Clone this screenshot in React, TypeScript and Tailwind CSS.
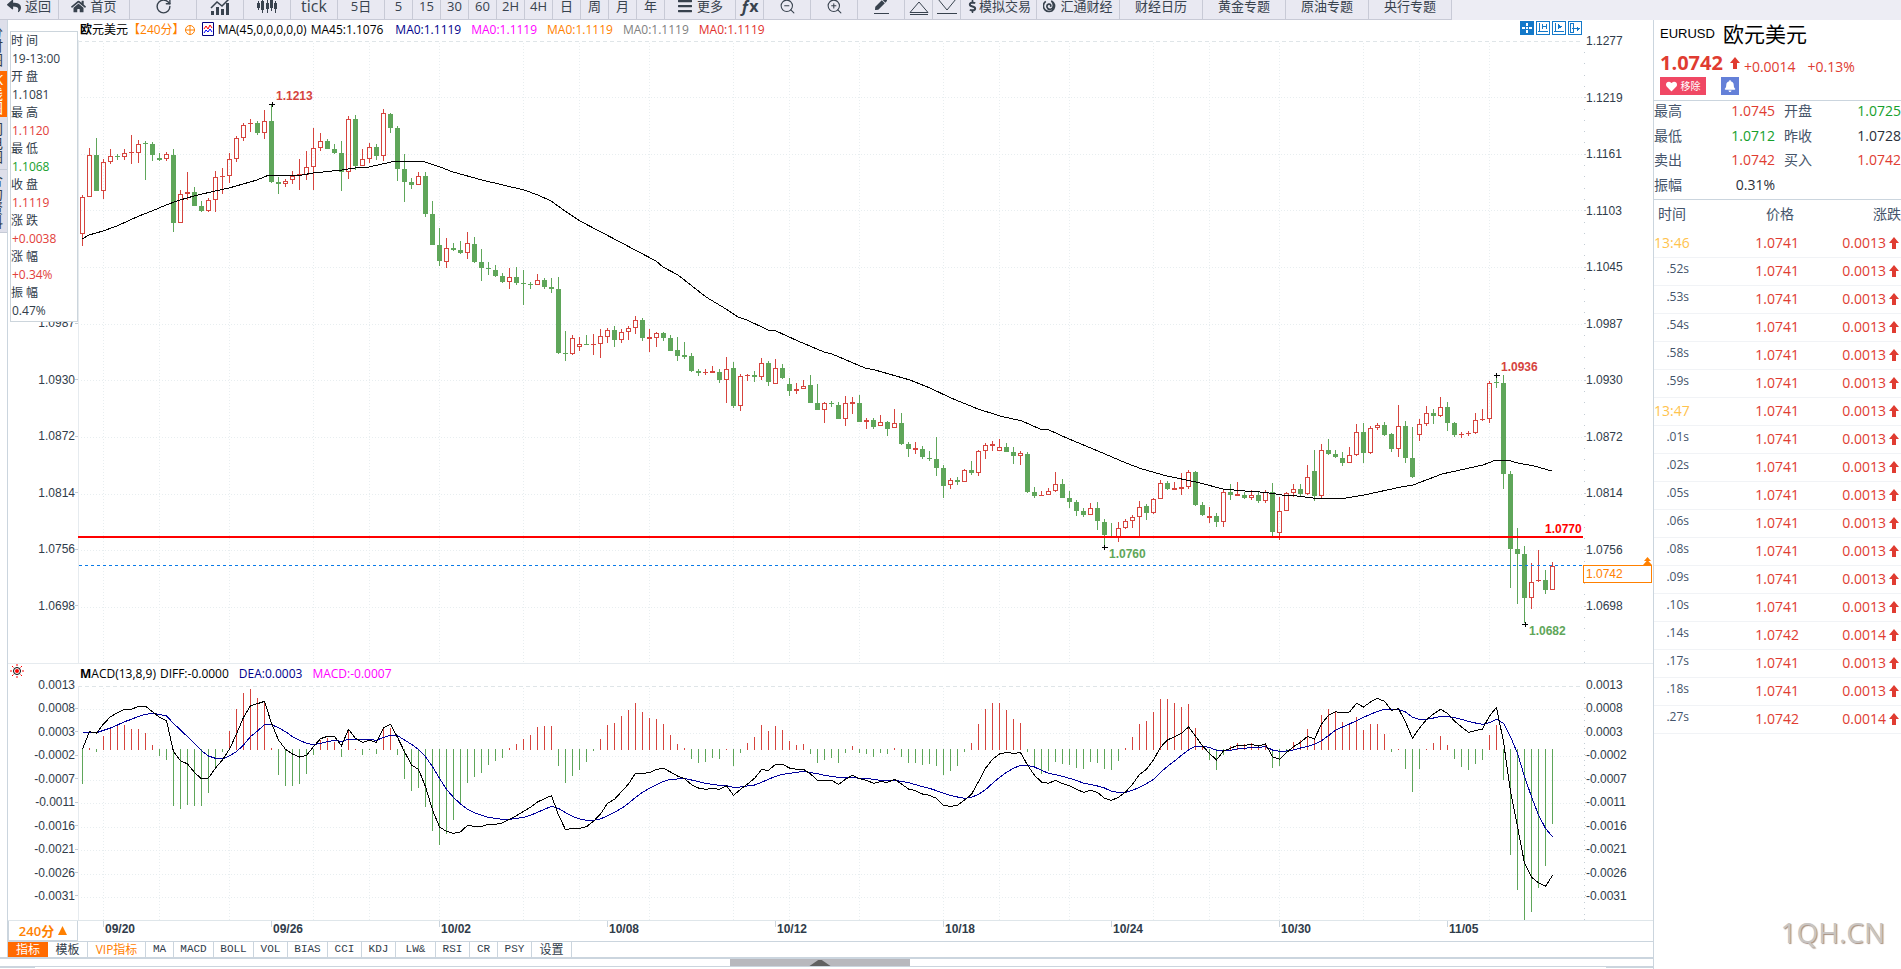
import type { ReactNode } from 'react'
import { FaReply, FaHome, FaBars, FaHeart, FaBell, FaPen, FaDollarSign } from 'react-icons/fa'
import { RotateCw, ZoomIn, ZoomOut } from 'lucide-react'

type Candle = [up: 0 | 1, high: number, top: number, bottom: number, low: number]

// Screen-space candles, 7px apart, first one centred on x = 82
const CANDLES: Candle[] = [
  [1,195,197,234,246],[1,148,155,197,197],[0,138,155,191,191],[1,159,162,191,199],[1,149,156,162,164],
  [0,154,156,157,160],[1,149,153,157,160],[1,135,152,153,164],[1,140,144,153,163],[0,141,143,144,180],
  [0,142,144,155,161],[0,153,158,160,161],[1,152,154,159,161],[0,149,155,223,232],[1,190,194,223,223],
  [1,172,192,194,200],[0,187,192,206,206],[0,201,206,211,212],[1,198,200,211,212],[1,171,177,200,212],
  [1,168,176,177,194],[1,153,159,176,183],[1,136,138,159,162],[1,123,125,138,141],[1,119,123,124,132],
  [0,121,123,133,135],[1,110,121,133,139],[0,105,121,182,183],[0,177,182,184,194],[1,179,181,184,187],
  [1,171,176,180,184],[1,159,174,175,190],[1,151,167,175,180],[1,128,148,167,190],[1,133,141,148,151],
  [0,139,141,149,149],[0,144,149,153,154],[0,141,153,172,191],[1,116,119,172,179],[0,115,119,166,170],
  [1,149,159,166,166],[1,143,147,159,163],[0,144,147,156,160],[1,109,113,156,161],[0,113,114,128,133],
  [0,126,128,169,181],[0,154,169,182,202],[0,178,182,185,189],[1,172,176,185,185],[0,172,176,214,217],
  [0,201,214,245,245],[0,228,245,261,266],[1,238,248,262,268],[0,243,248,250,251],[0,241,250,253,254],
  [1,232,243,253,259],[0,237,244,262,263],[0,249,262,268,281],[0,262,268,269,275],[0,265,270,276,277],
  [0,273,276,282,283],[1,268,277,282,289],[0,267,277,283,285],[0,270,283,284,305],[0,282,284,285,289],
  [1,274,280,285,285],[0,278,280,287,289],[0,278,287,289,293],[0,277,289,353,354],[0,331,353,354,361],
  [1,335,338,354,355],[1,337,344,347,351],[0,335,344,345,345],[1,334,344,345,355],[1,329,336,344,358],
  [1,328,330,337,343],[0,326,330,340,347],[1,329,332,340,343],[1,326,328,332,340],[1,316,320,328,334],
  [0,318,320,338,341],[1,329,337,339,352],[1,332,333,338,347],[0,332,333,338,341],[0,335,338,351,351],
  [0,337,350,356,361],[0,342,355,357,359],[0,353,356,371,372],[0,369,371,373,376],[1,369,372,373,375],
  [1,366,371,373,373],[0,369,372,380,383],[1,357,369,380,403],[0,362,368,406,408],[1,374,376,406,411],
  [1,374,375,376,381],[0,371,375,377,382],[1,358,363,377,380],[0,361,363,382,386],[1,359,368,384,384],
  [0,364,368,378,379],[0,378,384,391,396],[1,383,389,391,394],[1,380,386,389,389],[0,375,385,403,403],
  [0,384,403,410,410],[1,402,403,410,423],[0,401,403,404,407],[0,402,405,419,419],[1,396,403,419,426],
  [1,397,402,404,414],[0,395,403,422,422],[1,418,420,422,429],[0,418,420,427,429],[1,415,422,426,426],
  [0,421,422,429,436],[1,409,423,428,428],[0,413,423,444,445],[0,442,444,449,457],[1,442,448,450,454],
  [0,446,449,457,459],[0,451,458,459,461],[0,437,459,468,476],[0,465,468,486,498],[1,478,480,485,489],
  [0,477,480,482,485],[1,469,470,482,482],[0,461,470,473,475],[1,450,451,473,476],[1,443,445,451,459],
  [1,441,444,446,451],[1,439,447,451,451],[0,443,447,452,452],[0,447,452,456,464],[1,451,453,456,465],
  [0,452,454,492,493],[0,487,492,496,498],[1,491,495,496,496],[1,488,491,495,495],[1,472,484,491,492],
  [0,479,484,498,498],[0,491,498,502,508],[0,500,502,511,516],[0,508,511,515,517],[1,503,508,515,515],
  [0,502,508,521,530],[0,519,522,535,547],[0,523,537,538,538],[1,522,528,537,542],[1,519,521,528,529],
  [1,515,517,521,528],[1,501,507,517,536],[0,504,506,513,520],[1,498,499,513,514],[1,480,483,499,499],
  [0,481,483,489,490],[1,482,488,490,490],[1,473,487,489,495],[1,470,472,487,489],[0,471,472,505,506],
  [0,502,505,515,516],[1,507,516,518,523],[0,513,516,522,527],[1,489,492,522,527],[0,484,492,495,500],
  [1,482,494,496,496],[0,492,495,498,499],[1,490,495,498,500],[0,492,495,501,503],[1,490,492,501,503],
  [0,483,492,532,537],[1,497,511,533,540],[1,492,493,511,511],[1,484,489,493,497],[0,484,489,494,496],
  [1,465,477,494,495],[0,450,471,496,501],[1,444,450,496,498],[0,439,450,454,455],[0,450,454,457,458],
  [0,452,458,463,466],[1,447,455,463,463],[1,424,432,455,456],[0,423,432,453,463],[1,426,428,453,454],
  [1,423,425,428,430],[0,422,425,435,436],[0,433,434,449,452],[1,405,426,449,457],[0,421,426,458,463],
  [0,427,458,477,478],[1,419,424,435,441],[1,406,413,424,426],[0,409,413,416,424],[1,397,407,416,417],
  [0,402,407,423,431],[0,422,423,435,437],[1,432,434,435,438],[1,431,433,434,436],[1,413,420,433,434],
  [1,409,419,420,421],[1,381,383,419,423],[0,376,382,383,388],[0,375,383,474,489],[0,471,474,549,588],
  [0,528,549,554,604],[0,546,554,598,623],[1,563,582,598,609],[1,550,580,581,582],[0,570,580,590,594],
  [1,562,566,590,590],
]

const MA_POINTS =
  '82,239 89,235 103,231 117,226 139,216 152,211 166,205 180,200 194,196 215,191 229,188 243,184 257,180 269,175 302,175 313,173 342,170 355,168 369,167 391,162 398,161 414,161 425,162 440,167 453,172 482,180 524,190 538,195 551,201 565,211 580,221 620,242 656,261 663,267 678,275 706,297 726,309 738,317 747,320 768,330 776,331 798,341 824,352 832,354 865,368 875,370 910,380 930,388 951,398 978,409 1000,416 1022,421 1040,429 1049,430 1069,439 1098,451 1126,463 1142,469 1167,476 1196,482 1223,489 1245,491 1260,492 1269,493 1282,495 1297,496 1313,498 1346,498 1364,495 1401,487 1413,485 1442,474 1483,465 1496,460 1507,460 1518,463 1534,466 1552,471'

const HIST = [
  -35,2,-3,14,23,25,25,21,21,17,5,-7,-11,-57,-60,-56,-57,-57,-44,-19,-3,19,41,57,61,52,49,2,-26,-37,
  -37,-35,-25,-6,10,12,8,-8,19,1,-6,-1,-5,22,22,-6,-30,-42,-39,-58,-82,-96,-85,-71,-55,-34,-28,-24,-16,-12,
  -9,2,6,11,15,23,24,24,-17,-34,-27,-21,-13,-2,11,25,27,34,40,47,38,32,31,26,15,6,2,-10,-14,-13,
  -9,-10,1,-17,-4,7,13,25,19,24,20,9,5,6,-5,-14,-11,-9,-14,-4,4,-4,-5,-8,-4,-5,2,-8,-14,-14,
  -16,-15,-17,-26,-22,-17,-3,7,26,41,47,47,40,31,27,-3,-19,-25,-22,-13,-15,-16,-19,-20,-13,-14,-20,-21,-12,2,
  13,26,29,38,51,51,47,43,46,22,4,-11,-21,-6,4,7,6,7,3,6,-19,-17,-3,8,10,21,12,35,41,38,
  28,25,33,20,26,26,16,-3,1,-20,-43,-20,1,7,14,5,-10,-18,-21,-15,-11,15,25,-31,-106,-141,-172,-163,-139,-117,
  -75,
]

// DIFF / DEA are kept in thirds of a pixel
const DIFF = [
  327,275,279,252,230,218,208,208,199,199,215,232,242,335,362,372,397,417,414,384,360,327,282,232,197,191,184,250,300,328,
  342,351,346,320,296,289,289,317,268,295,307,301,307,264,253,292,335,375,388,440,510,561,574,580,576,556,559,559,553,553,
  549,538,527,514,502,486,476,467,525,569,565,565,560,544,522,490,478,455,432,400,400,398,388,385,396,408,416,434,444,448,
  445,448,437,466,448,432,415,389,391,373,373,384,388,388,402,421,421,421,433,418,406,416,421,430,425,427,418,432,447,452,
  462,466,475,496,499,496,480,463,425,385,358,342,337,340,338,375,406,426,430,421,431,437,448,457,451,457,475,481,472,456,
  433,403,388,360,322,300,290,280,261,288,318,340,360,333,325,316,316,313,318,312,350,358,338,320,307,289,297,252,226,215,
  219,216,190,201,186,175,184,211,206,246,295,264,239,222,208,220,243,261,277,272,267,228,202,305,455,560,670,712,728,739,
  706,
]

const DEA = [
  277,277,278,271,264,255,245,238,229,223,220,223,228,250,270,290,310,332,348,355,357,347,335,315,290,273,254,254,263,275,
  290,301,310,314,310,305,301,304,298,298,298,298,301,292,286,287,300,313,328,350,380,415,448,472,492,508,518,526,532,535,
  538,538,535,532,526,517,508,499,505,518,529,537,541,541,537,527,517,505,490,472,457,445,434,424,418,417,415,420,425,430,
  433,436,437,442,441,438,435,427,418,409,403,400,397,394,398,401,406,409,412,414,412,415,415,418,421,421,421,424,428,434,
  440,445,452,460,466,471,475,472,463,449,430,412,397,385,376,376,381,391,400,404,409,415,421,430,433,438,444,454,457,457,
  451,442,431,418,397,379,363,346,330,319,319,322,331,331,331,327,325,322,322,320,330,334,333,330,324,319,313,302,287,271,
  261,252,242,232,223,214,208,208,208,216,232,238,238,234,229,230,233,238,244,249,253,248,238,250,290,340,410,470,525,565,
  590,
]

const PRICES = ['1.1277','1.1219','1.1161','1.1103','1.1045','1.0987','1.0930','1.0872','1.0814','1.0756','1.0698']
const PRICE_LINES = [97, 154, 210, 267, 324, 380, 437, 494, 550, 607]
const MACD_LEVELS = ['0.0013','0.0008','0.0003','-0.0002','-0.0007','-0.0011','-0.0016','-0.0021','-0.0026','-0.0031']
const MACD_LINES = [709, 733, 756, 780, 803, 827, 850, 874, 897]
const V_LINES = [103, 159, 229, 313, 369, 439, 523, 579, 649, 733, 789, 859, 943, 999, 1069, 1153, 1209, 1279, 1363, 1419, 1489]
const DATES = ['09/20','09/26','10/02','10/08','10/12','10/18','10/24','10/30','11/05']

const PLOT_X = 78
const PLOT_W = 1507
const xAt = (i: number) => 82 + i * 7
const pct = (x: number) => `${((x - PLOT_X) / PLOT_W) * 100}%`
const macdLine = (v: number[]) => v.map((n, i) => `${xAt(i) + 0.5},${640 + n / 3}`).join(' ')

const QUOTE = [
  ['时 间', '19-13:00', 'text-[#303c4a]'],
  ['开 盘', '1.1081', 'text-[#303c4a]'],
  ['最 高', '1.1120', 'text-[#e2403a]'],
  ['最 低', '1.1068', 'text-[#16a02c]'],
  ['收 盘', '1.1119', 'text-[#e2403a]'],
  ['涨 跌', '+0.0038', 'text-[#e2403a]'],
  ['涨 幅', '+0.34%', 'text-[#e2403a]'],
  ['振 幅', '0.47%', 'text-[#303c4a]'],
]

const TICKS = [
  ['13:46', '1.0741'], ['.52s', '1.0741'], ['.53s', '1.0741'], ['.54s', '1.0741'], ['.58s', '1.0741'], ['.59s', '1.0741'],
  ['13:47', '1.0741'], ['.01s', '1.0741'], ['.02s', '1.0741'], ['.05s', '1.0741'], ['.06s', '1.0741'], ['.08s', '1.0741'],
  ['.09s', '1.0741'], ['.10s', '1.0741'], ['.14s', '1.0742'], ['.17s', '1.0741'], ['.18s', '1.0741'], ['.27s', '1.0742'],
]

const INDICATORS = [
  ['MA', 'w-[28px]'], ['MACD', 'w-[40px]'], ['BOLL', 'w-[40px]'], ['VOL', 'w-[34px]'], ['BIAS', 'w-[40px]'],
  ['CCI', 'w-[34px]'], ['KDJ', 'w-[34px]'], ['LW&', 'w-[40px]'], ['RSI', 'w-[34px]'], ['CR', 'w-[28px]'], ['PSY', 'w-[34px]'],
]

export default function App() {
  return (
    <div className="flex min-h-screen flex-col overflow-hidden bg-white font-['Open_Sans','Noto_Sans_CJK_SC',sans-serif] text-[#303c4a]">
      <Toolbar />
      <div className="flex flex-1">
        <div className="flex min-w-0 flex-1 flex-col">
          <div className="flex">
            <SideTabs />
            <main className="min-w-0 flex-1 border-l border-[#cbd5de]">
              <PricePane />
              <MacdPane />
              <DateAxis />
              <IndicatorTabs />
            </main>
          </div>
          <div className="flex h-[10px] justify-center border-y border-t-2 border-[#cbd5de] pr-[14px]">
            <button aria-label="展开" className="flex w-[180px] items-center justify-center bg-[#b8b8bd]">
              <svg width="24" height="7" viewBox="0 0 24 8"><path d="M0 8 10 1h4l10 7z" fill="#616161" /></svg>
            </button>
          </div>
          <div className="flex justify-between">
            <span className="h-px w-[35px] bg-[#cbd5de]" />
            <span className="h-px w-[47px] bg-[#cbd5de]" />
          </div>
        </div>
        <QuotePanel />
      </div>
    </div>
  )
}

function ToolButton({ width, label, children }: { width: string; label?: string; children: ReactNode }) {
  return (
    <button
      aria-label={label}
      className={`flex h-[26px] shrink-0 items-center justify-center gap-1 border-r border-[#c8cad6] whitespace-nowrap ${width}`}
    >
      {children}
    </button>
  )
}

function Toolbar() {
  return (
    <header className="h-5 overflow-hidden bg-[#ededf4]">
      <div className="-mt-[7px] flex w-max border-b border-[#c8cad6] bg-[#e9e9f2] text-[13px] leading-[14px] text-[#38424e]">
        <ToolButton width="w-[59px]"><FaReply size={14} />返回</ToolButton>
        <ToolButton width="w-[71px]"><FaHome size={15} />首页</ToolButton>
        <ToolButton width="w-[67px]" label="刷新"><RotateCw size={17} strokeWidth={2} /></ToolButton>
        <ToolButton width="w-[47px]" label="走势">
          <svg width="20" height="17" viewBox="0 0 20 17" fill="#38424e">
            <path d="M1 17v-4h3v4zM6 17V9h3v8zM11 17v-6h3v6zM16 17V5h3v12z" />
            <path d="M1 10 7 4l5 4 7-7" fill="none" stroke="#38424e" strokeWidth="1.5" />
          </svg>
        </ToolButton>
        <ToolButton width="w-[47px]" label="K线">
          <svg width="20" height="16" viewBox="0 0 20 16" fill="#38424e">
            <path d="M0 5h3v5H0zM4 3h3v9H4zM9 5h3v6H9zM13 2h3v8h-3zM17 5h3v6h-3z" />
            <path d="M1 3h1v9H1zM5 0h1v15H5zM10 2h1v13h-1zM14 0h1v13h-1zM18 3h1v12h-1z" />
          </svg>
        </ToolButton>
        <ToolButton width="w-[47px]"><span className="text-base leading-[14px]">tick</span></ToolButton>
        <ToolButton width="w-[47px]">5日</ToolButton>
        {['5', '15', '30', '60', '2H', '4H', '日', '周', '月', '年'].map((p) => (
          <ToolButton key={p} width="w-[28px]">{p}</ToolButton>
        ))}
        <ToolButton width="w-[71px]"><FaBars size={16} />更多</ToolButton>
        <ToolButton width="w-[28px]" label="函数"><span className="text-base leading-[14px] font-bold"><i>ƒ</i>x</span></ToolButton>
        <ToolButton width="w-[47px]" label="缩小"><ZoomOut size={17} strokeWidth={1.5} /></ToolButton>
        <ToolButton width="w-[47px]" label="放大"><ZoomIn size={17} strokeWidth={1.5} /></ToolButton>
        <ToolButton width="w-[47px]" label="画线">
          <span className="flex h-4 w-[15px] items-start justify-center border-b border-[#38424e]"><FaPen size={12} /></span>
        </ToolButton>
        <ToolButton width="w-[28px]" label="上">
          <svg width="20" height="20" viewBox="0 0 20 20" fill="none" stroke="#38424e"><path d="M1 16.500 10 6l9 10.500zM1 18.500h18" /></svg>
        </ToolButton>
        <ToolButton width="w-[28px]" label="下">
          <svg width="20" height="20" viewBox="0 0 20 20" fill="none" stroke="#38424e"><path d="m1 3 9 11 9-11M0 17.500h20" /></svg>
        </ToolButton>
        <ToolButton width="w-[76px]"><FaDollarSign size={13} className="-mr-1" />模拟交易</ToolButton>
        <ToolButton width="w-[83px]">
          <svg width="13" height="14" viewBox="0 0 14 14" fill="none" stroke="#38424e" strokeWidth="1.800">
            <path d="M3 2a6 6 0 1 0 6-.5C12 4 12 10 8 10.500 4 11 3 6 6 5c2-.5 3 1 2 3" />
          </svg>
          汇通财经
        </ToolButton>
        {['财经日历', '黄金专题', '原油专题', '央行专题'].map((t) => (
          <ToolButton key={t} width="w-[83px]">{t}</ToolButton>
        ))}
      </div>
    </header>
  )
}

function SideTabs() {
  return (
    <nav className="flex w-[7px] shrink-0 flex-col text-[14px] leading-[14px]">
      <SideTab look="h-[51px] bg-[#dedfea]" text="分时图" />
      <SideTab look="h-[46px] bg-[#ff6a00] text-white" text="K线图" />
      <SideTab look="h-[53px] border-b border-[#c5cad6] bg-[#dedfea]" text="闪电图" />
      <SideTab look="h-[63px] border-b border-[#c5cad6] bg-[#dedfea]" text="合约资料" />
    </nav>
  )
}

function SideTab({ look, text }: { look: string; text: string }) {
  return (
    <button aria-label={text} className={`flex flex-col items-end justify-center overflow-hidden pr-1 ${look}`}>
      {text.split('').map((c) => <span key={c}>{c}</span>)}
    </button>
  )
}

function AxisLabels({ labels, side, className }: { labels: string[]; side: 'left' | 'right'; className: string }) {
  return (
    <div className={`flex flex-col justify-between font-['Liberation_Sans',sans-serif] text-xs leading-4 ${className}`}>
      {labels.map((l) => (
        <div key={l} className={`flex items-center justify-end ${side === 'left' ? '' : 'flex-row-reverse'}`}>
          <span>{l}</span>
          <span className={`h-px ${side === 'left' ? 'w-[3px]' : 'w-px'} ${l === PRICES[0] || l === MACD_LEVELS[0] ? '' : 'bg-[#c3ccd4]'}`} />
        </div>
      ))}
    </div>
  )
}

function PricePane() {
  return (
    <section className="relative flex h-[644px] border-b border-[#e6ebef]">
      {/* the upper half of the left axis sits behind the quote box */}
      <AxisLabels side="left" labels={PRICES.slice(5)} className="mt-[295px] h-[299px] w-[70px] shrink-0" />
      <div className="flex min-w-0 flex-1 flex-col">
        <div className="flex h-5 shrink-0 items-center pr-[3px] pl-[2px] text-xs whitespace-nowrap">
          <span className="text-black"><b>欧</b>元美元</span>
          <span className="text-[#ff8000]">【240分】</span>
          <svg className="mr-[7px]" width="10" height="10" viewBox="0 0 10 10" fill="none" stroke="#ff8000">
            <circle cx="5" cy="5" r="4.500" /><path d="M0 5h10M5 0v10" />
          </svg>
          <svg className="mr-1 shrink-0" width="12" height="16" viewBox="0 0 12 16" fill="none">
            <path d="M.5.5h11v13H.5z" stroke="#000080" />
            <path d="m2 7 2-3 2 3 2-4 2 3" stroke="#f00" /><path d="m2 11 2-3 2 2 2-3 2 3" stroke="#00f" />
          </svg>
          <span className="text-black">MA(45,0,0,0,0,0)</span>
          <span className="ml-1 text-black">MA45:1.1076</span>
          <span className="ml-3 text-[#00008b]">MA0:1.1119</span>
          <span className="ml-[10px] text-[#ff00ff]">MA0:1.1119</span>
          <span className="ml-[10px] text-[#ff8000]">MA0:1.1119</span>
          <span className="ml-[10px] text-[#808080]">MA0:1.1119</span>
          <span className="ml-[10px] text-[#e2302c]">MA0:1.1119</span>
          <ChartTools />
        </div>
        <div className="relative min-h-0 flex-1">
          <svg className="block h-full w-full" viewBox="78 40 1507 623" preserveAspectRatio="none" shapeRendering="crispEdges">
            <g stroke="#e8eef0" strokeDasharray="1 2">
              <path d="M78 41.500H1583" strokeDasharray="4 3" stroke="#dfe5e8" />
              {PRICE_LINES.map((y) => <path key={y} d={`M78 ${y + 0.5}H1583`} />)}
              {V_LINES.map((x) => <path key={x} d={`M${x + 0.5} 43V664`} />)}
            </g>
            <path d="M78.500 40V664" stroke="#e6ebef" />
            <path d="M1584.500 52V664" stroke="#c3ccd4" strokeDasharray="1 10.300" />
            {CANDLES.map(([up, high, top, bottom, low], i) => {
              const x = xAt(i)
              return up ? (
                <g key={i} stroke="#d6443e" fill="none">
                  <path d={`M${x + 0.5} ${high}V${top}M${x + 0.5} ${bottom}V${low}`} />
                  {bottom - top < 3
                    ? <rect x={x - 2} y={top} width="5" height={bottom - top} fill="#d6443e" stroke="none" />
                    : <rect x={x - 1.5} y={top + 0.5} width="4" height={bottom - top - 1} />}
                </g>
              ) : (
                <g key={i} fill="#5fa65a">
                  <rect x={x} y={high} width="1" height={low - high} />
                  <rect x={x - 2} y={top} width="5" height={bottom - top} />
                </g>
              )
            })}
            <polyline points={MA_POINTS} fill="none" stroke="#000" />
            <path d="M78 537H1583" stroke="#f00" strokeWidth="2" />
            <path d="M79 565.500H1583" stroke="#0a7be8" strokeDasharray="3 3" />
            <path d="M269 104.500h6M272.500 102v5M1102 547.500h6M1104.500 545v5M1494 375.500h6M1496.500 373v5M1522 624.500h6M1525.500 622v5" stroke="#000" />
          </svg>
          <Peak x={276} y={96} color="text-[#d6443e]">1.1213</Peak>
          <Peak x={1109} y={554} color="text-[#5fa65a]">1.0760</Peak>
          <Peak x={1501} y={367} color="text-[#d6443e]">1.0936</Peak>
          <Peak x={1529} y={631} color="text-[#5fa65a]">1.0682</Peak>
          <Peak x={1545} y={529} color="text-[#f00]">1.0770</Peak>
        </div>
      </div>
      <div className="relative w-[68px] shrink-0">
        <AxisLabels side="right" labels={PRICES} className="mt-[13px] h-[581px]" />
        <svg className="absolute top-[537px] right-[1px]" width="9" height="8" viewBox="0 0 9 8" fill="#ff8000"><path d="M4.500 0 8 4H1zM4.500 3 9 8H0z" /></svg>
        <div className="absolute top-[545px] -left-[2px] h-[18px] w-[69px] border border-[#ff8000] bg-white pl-[2px] font-['Liberation_Sans',sans-serif] text-xs leading-4 text-[#ff8000]">
          1.0742
        </div>
      </div>
      <dl className="absolute top-[11px] left-[2px] h-[291px] w-[68px] border border-[#ccd5dc] bg-white text-xs leading-[18px]">
        {QUOTE.map(([k, v, color]) => (
          <div key={k}>
            <dt>{k}</dt>
            <dd className={`pl-[1px] ${color}`}>{v}</dd>
          </div>
        ))}
      </dl>
    </section>
  )
}

function Peak({ x, y, color, children }: { x: number; y: number; color: string; children: string }) {
  return (
    <span
      className={`absolute font-['Liberation_Sans',sans-serif] text-xs leading-4 font-bold ${color}`}
      style={{ left: pct(x), top: y - 48 }}
    >
      {children}
    </span>
  )
}

function ChartTools() {
  return (
    <div className="ml-auto flex gap-[2px] self-start pt-[1px]">
      <button aria-label="十字光标">
        <svg width="14" height="14" viewBox="0 0 14 14" shapeRendering="crispEdges"><path d="M0 0h14v14H0z" fill="#1479c9" /><path d="M6 2h2v3H6zM6 9h2v3H6zM2 6h3v2H2zM9 6h3v2H9zM6 6h2v2H6z" fill="#fff" /></svg>
      </button>
      <button aria-label="左移"><ToolGlyph d="M3.500 2v9M2 10.500h10M6.500 3v5M10.500 3v5M7 5.500h3" /></button>
      <button aria-label="右移"><ToolGlyph d="M3.500 2v9M2 10.500h10M6.500 3v5M7.500 4v3M8.500 4.500v2M9.500 5v1" /></button>
      <button aria-label="锁定"><ToolGlyph d="M2.500 2.500h3v9h-3zM4 7.500h8M9.500 5.500v4M10.500 6.500v2" /></button>
    </div>
  )
}

function ToolGlyph({ d }: { d: string }) {
  return (
    <svg width="14" height="14" viewBox="0 0 14 14" fill="none" stroke="#1479c9" shapeRendering="crispEdges">
      <path d="M.5.5h13v13H.5z" /><path d={d} />
    </svg>
  )
}

function MacdPane() {
  return (
    <section className="relative flex h-[257px] border-b border-[#dfe6ea]">
      <AxisLabels side="left" labels={MACD_LEVELS} className="mt-[13px] h-[227px] w-[70px] shrink-0" />
      <div className="flex min-w-0 flex-1 flex-col">
        <div className="flex h-[22px] shrink-0 items-center pb-[2px] pl-[2px] text-xs">
          <span className="text-black"><b>M</b>ACD(13,8,9)</span>
          <span className="ml-1 text-black">DIFF:-0.0000</span>
          <span className="ml-[10px] text-[#00008b]">DEA:0.0003</span>
          <span className="ml-[10px] text-[#ff00ff]">MACD:-0.0007</span>
        </div>
        <svg className="block min-h-0 w-full flex-1" viewBox="78 686 1507 234" preserveAspectRatio="none" shapeRendering="crispEdges">
          <g stroke="#e8eef0" strokeDasharray="1 2">
            <path d="M78 686.500H1583" strokeDasharray="4 3" stroke="#dfe5e8" />
            {MACD_LINES.map((y) => <path key={y} d={`M78 ${y + 0.5}H1583`} />)}
            {V_LINES.map((x) => <path key={x} d={`M${x + 0.5} 688V921`} />)}
          </g>
          <path d="M78.500 686V921" stroke="#e6ebef" />
          <path d="M1584.500 697V921" stroke="#c3ccd4" strokeDasharray="1 4.700" />
          {HIST.map((h, i) => (
            <rect key={i} x={xAt(i)} y={h > 0 ? 750 - h : 749} width="1" height={Math.abs(h)} fill={h > 0 ? '#d6443e' : '#5fa65a'} />
          ))}
          <polyline points={macdLine(DEA)} fill="none" stroke="#00009b" />
          <polyline points={macdLine(DIFF)} fill="none" stroke="#000" />
        </svg>
      </div>
      <AxisLabels side="right" labels={MACD_LEVELS} className="mt-[13px] h-[227px] w-[68px] shrink-0" />
      <svg className="absolute top-0 left-[2px]" width="14" height="14" viewBox="0 0 14 14" fill="none">
        <circle cx="7" cy="7" r="3.500" stroke="#000" /><circle cx="7" cy="7" r="2" fill="#f00" />
        <path d="M7 0v2M7 12v2M0 7h2M12 7h2M2 2l1.500 1.500M10.500 10.500 12 12M12 2l-1.500 1.500M3.500 10.500 2 12" stroke="#f00" />
      </svg>
    </section>
  )
}

function DateAxis() {
  return (
    <div className="flex h-5">
      <button className="flex w-[70px] shrink-0 items-center justify-center gap-1 border border-t-0 border-[#cbd5de] text-[13px] leading-4 font-semibold text-[#ff8000]">
        240分
        <svg width="9" height="9" viewBox="0 0 9 9" fill="#ff8000"><path d="M4.500 0 9 9H0z" /></svg>
      </button>
      <div className="relative min-w-0 flex-1 font-['Liberation_Sans',sans-serif] text-xs leading-4 font-bold">
        {DATES.map((d, i) => (
          <span key={d} className="absolute top-0 flex gap-px" style={{ left: pct(103 + i * 168) }}>
            <span className="h-[6px] w-px bg-[#cbd5de]" />
            {d}
          </span>
        ))}
      </div>
      <div className="w-[68px] shrink-0" />
    </div>
  )
}

function IndicatorTabs() {
  return (
    <div className="flex h-4 border-t border-[#cbd5de] text-xs leading-[15px]">
      <button className="w-[40px] bg-[#ff6a00] text-white">指标</button>
      <button className="w-[40px] border-r border-[#cbd5de]">模板</button>
      <button className="w-[58px] border-r border-[#cbd5de] text-[#ff8000]">VIP指标</button>
      {INDICATORS.map(([name, w]) => (
        <button key={name} className={`border-r border-[#cbd5de] font-['Liberation_Mono',monospace] text-[11px] ${w}`}>{name}</button>
      ))}
      <button className="w-[40px] border-r border-[#cbd5de]">设置</button>
    </div>
  )
}

function UpArrow() {
  return (
    <svg width="10" height="12" viewBox="0 0 10 12" fill="#e03c31"><path d="M5 0l5 6H7v6H3V6H0z" /></svg>
  )
}

function Stat({ label, value, color = '', className }: { label: string; value: string; color?: string; className: string }) {
  return (
    <div className={`flex justify-between ${className}`}>
      <dt className="text-[#44546a]">{label}</dt>
      <dd className={color}>{value}</dd>
    </div>
  )
}

function QuotePanel() {
  return (
    <aside className="flex w-[248px] shrink-0 flex-col border-l border-[#cbd5de] text-sm">
      <div className="h-[81px] border-b border-[#cbd5de] pl-[6px]">
        <h1 className="flex h-7 items-center gap-2 text-black">
          <span className="font-['Liberation_Sans',sans-serif] text-[13px]">EURUSD</span>
          <span className="text-[21px] leading-7">欧元美元</span>
        </h1>
        <div className="flex h-[29px] items-center text-[#e03c31]">
          <span className="mr-[7px] text-xl leading-7 font-bold">1.0742</span>
          <UpArrow />
          <span className="mt-2 ml-1 leading-5">+0.0014</span>
          <span className="mt-2 ml-3 leading-5">+0.13%</span>
        </div>
        <div className="flex gap-[15px]">
          <button className="flex h-[18px] w-[46px] items-center justify-center gap-1 bg-[#f04864] text-[10px] text-white"><FaHeart size={11} />移除</button>
          <button aria-label="提醒" className="flex h-[18px] w-[18px] items-center justify-center bg-[#6480d8] text-white"><FaBell size={12} /></button>
        </div>
      </div>
      <dl className="flex h-[99px] flex-wrap justify-between border-b border-[#cbd5de] leading-[20px] text-[#2a2f3a]">
        <Stat label="最高" value="1.0745" color="text-[#e03c31]" className="w-[121px]" />
        <Stat label="开盘" value="1.0725" color="text-[#16a02c]" className="w-[117px]" />
        <Stat label="最低" value="1.0712" color="text-[#16a02c]" className="w-[121px]" />
        <Stat label="昨收" value="1.0728" className="w-[117px]" />
        <Stat label="卖出" value="1.0742" color="text-[#e03c31]" className="w-[121px]" />
        <Stat label="买入" value="1.0742" color="text-[#e03c31]" className="w-[117px]" />
        <Stat label="振幅" value="0.31%" className="w-[121px]" />
      </dl>
      <table className="w-full table-fixed">
        <thead>
          <tr className="h-[29px] text-[#44546a]">
            <th className="w-[35px] pb-[2px] pl-1 text-left font-normal whitespace-nowrap">时间</th>
            <th className="w-[110px] pr-[5px] pb-[2px] text-right font-normal">价格</th>
            <th className="pb-[2px] text-right font-normal">涨跌</th>
          </tr>
        </thead>
        <tbody>
          {TICKS.map(([time, price]) => (
            <tr key={time} className="h-[28px] border-b border-[#f1f3f6] text-[#e03c31]">
              {time.includes(':')
                ? <td className="p-0 text-[#ffc34d]">{time}</td>
                : <td className="p-0 pb-1 text-right text-xs text-[#44546a]">{time}</td>}
              <td className="p-0 text-right">{price}</td>
              <td className="p-0 pr-[2px]">
                <span className="flex items-center justify-end gap-[3px]">{price === '1.0742' ? '0.0014' : '0.0013'}<UpArrow /></span>
              </td>
            </tr>
          ))}
        </tbody>
      </table>
      <span className="mt-auto mr-4 mb-[17px] self-end text-[28px] leading-10 text-[#c9c5c2] [text-shadow:1px_1px_1px_#a58f80]">1QH.CN</span>
    </aside>
  )
}
